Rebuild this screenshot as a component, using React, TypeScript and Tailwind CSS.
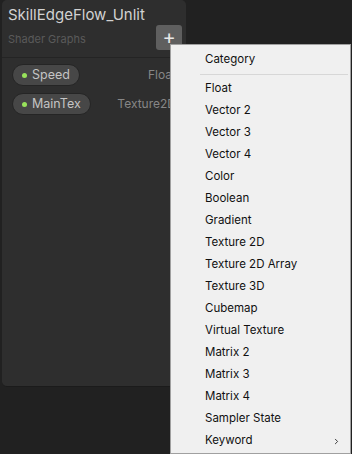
import { ChevronRight } from 'lucide-react';

const properties = [
  { name: 'Speed', type: 'Float' },
  { name: 'MainTex', type: 'Texture2D' },
];

const menuItems = [
  'Float',
  'Vector 2',
  'Vector 3',
  'Vector 4',
  'Color',
  'Boolean',
  'Gradient',
  'Texture 2D',
  'Texture 2D Array',
  'Texture 3D',
  'Cubemap',
  'Virtual Texture',
  'Matrix 2',
  'Matrix 3',
  'Matrix 4',
  'Sampler State',
];

function BlackboardPanel() {
  return (
    <div className="ml-[2px] w-[184px] h-[387px] rounded-[5px] bg-[#2e2e2e] border-b border-[#1b1b1b] overflow-hidden flex flex-col">
      {/* Header */}
      <div className="h-[58px] pl-[6px] pr-[4px] pt-[5px] border-b border-[#242424]">
        <div className="text-[15px] leading-[20px] text-[#d2d2d2]">SkillEdgeFlow_Unlit</div>
        <div className="flex items-start justify-between">
          <div className="text-[11px] leading-[16px] mt-[6px] text-[#5a5a5a]">Shader Graphs</div>
          <button className="w-[26px] h-[25px] rounded-[3px] bg-[#5f5f5f] text-[#e8e8e8] text-[20px] leading-[25px] flex items-center justify-center">
            +
          </button>
        </div>
      </div>

      {/* Properties */}
      <div className="flex flex-col gap-[7px] pt-[6px] pl-[10px] pr-[10px]">
        {properties.map((p) => (
          <div key={p.name} className="flex items-center justify-between">
            <div className="h-[22px] rounded-full bg-[#474747] border border-[#252525] flex items-center pl-[9px] pr-[9px] gap-[5px]">
              <span className="w-[5px] h-[5px] rounded-full bg-[#98e35b]" />
              <span className="text-[12.5px] text-[#c4c4c4] leading-none">{p.name}</span>
            </div>
            <span className="text-[12px] text-[#868686] whitespace-nowrap">{p.type}</span>
          </div>
        ))}
      </div>
    </div>
  );
}

function AddMenu() {
  return (
    <div className="absolute left-[170px] top-[44px] w-[181px] h-[410px] bg-[#f0f0f0] border border-[#a0a0a0] text-[11.5px] text-[#111] pt-[4px]">
      <div className="h-[22px] flex items-center pl-[34px]">Category</div>
      <div className="h-[7px] flex items-center pl-[29px] pr-[2px]">
        <div className="h-px w-full bg-[#d7d7d7]" />
      </div>
      {menuItems.map((item) => (
        <div key={item} className="h-[22px] flex items-center pl-[34px]">
          {item}
        </div>
      ))}
      <div className="h-[22px] flex items-center justify-between pl-[34px] pr-[9px]">
        <span>Keyword</span>
        <ChevronRight className="w-[9px] h-[9px] text-[#333]" strokeWidth={2.5} />
      </div>
    </div>
  );
}

export default function App() {
  return (
    <div
      className="w-[352px] h-[454px] bg-[#212121] relative overflow-hidden"
      style={{ fontFamily: 'Inter, "Noto Sans", sans-serif' }}
    >
      <BlackboardPanel />
      <AddMenu />
    </div>
  );
}
